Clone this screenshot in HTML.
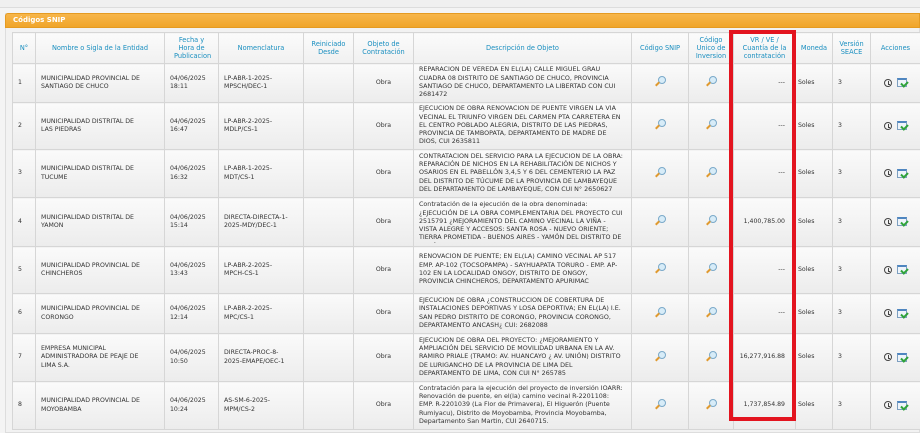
<!DOCTYPE html>
<html><head><meta charset="utf-8"><style>
*{margin:0;padding:0;box-sizing:border-box}
body{width:920px;height:426px;overflow:hidden;background:#f4f4f4;font-family:"DejaVu Sans","Liberation Sans",sans-serif;position:relative}
.top{position:absolute;left:0;top:0;width:920px;height:8px;background:#f0f0f0;border-bottom:1px solid #ddd}
.panel{position:absolute;left:5px;top:13px;width:915px;height:420px;background:#f2f2f2;border:1px solid #ddd}
.bar{position:absolute;left:5px;top:13px;width:915px;height:15px;background:linear-gradient(#f7b64a,#f0a52a);border:1px solid #e59b22;border-radius:3px 0 0 0;color:#fff;font-weight:bold;font-size:7px;line-height:13px;padding-left:7px}
table{position:absolute;left:12px;top:32px;border-collapse:collapse;table-layout:fixed;width:908px;font-size:6.2px;color:#333}
th{color:#1a8fc0;font-weight:normal;font-size:6.6px;background:linear-gradient(#fbfbfb,#f0f0f0);height:31px;border:1px solid #d6d6d6;text-align:center;line-height:8.2px;padding:0 7px}
td{border:1px solid #d6d6d6;background:linear-gradient(#fafafa,#ececec);line-height:8.3px;padding:0 5px;vertical-align:middle}
td div{overflow:hidden}
td.d{font-size:6.35px;padding-right:7px}
td.n{padding-right:22px}td.m{padding-right:14px}
td.c{text-align:center}td.r{text-align:right;padding-right:10px}
.mg{display:inline-block;position:relative;width:10px;height:10px}
.mg:before{content:"";position:absolute;left:3px;top:0;width:6px;height:6px;border-radius:50%;border:1px solid #7aa9c9;background:#d7ecf8}
.mg:after{content:"";position:absolute;left:0;top:7px;width:5px;height:2px;background:#e09a30;transform:rotate(-45deg)}
.ck{display:inline-block;width:8px;height:8px;border:1.3px solid #444;border-radius:50%;position:relative;vertical-align:middle}
.ck:after{content:"";position:absolute;left:2.5px;top:1px;width:1.5px;height:3px;border-left:1px solid #444;border-bottom:1px solid #444}
.cal{display:inline-block;width:10px;height:9px;border:1px solid #7d9fc0;border-top:2px solid #4f86c0;background:#eef4fa;position:relative;vertical-align:middle;margin-left:5px}
.cal:after{content:"";position:absolute;right:-2px;bottom:0px;width:5px;height:3px;border-left:2px solid #2fa33a;border-bottom:2px solid #2fa33a;transform:rotate(-45deg)}
.red{position:absolute;left:729px;top:30px;width:67px;height:391px;border:4px solid #e3141f}
</style></head><body>
<div class="top"></div>
<div class="panel"></div>
<div class="bar">Códigos SNIP</div>
<table>
<colgroup><col style="width:23px"><col style="width:129px"><col style="width:54px"><col style="width:85px"><col style="width:50px"><col style="width:60px"><col style="width:218px"><col style="width:57px"><col style="width:45px"><col style="width:62px"><col style="width:37px"><col style="width:38px"><col style="width:50px"></colgroup>
<tr><th style="padding:0">N°</th><th>Nombre o Sigla de la Entidad</th><th style="padding:0 9px">Fecha y Hora de Publicacion</th><th>Nomenclatura</th><th>Reiniciado Desde</th><th style="padding:0 4px">Objeto de Contratación</th><th>Descripción de Objeto</th><th style="padding:0">Código SNIP</th><th style="padding:0 3px">Código Unico de Inversion</th><th style="padding:0 5px">VR / VE / Cuantía de la contratación</th><th style="padding:0">Moneda</th><th style="padding:0 3px">Versión SEACE</th><th style="padding:0">Acciones</th></tr>
<tr style="height:39px"><td>1</td><td class="n">MUNICIPALIDAD PROVINCIAL DE SANTIAGO DE CHUCO</td><td>04/06/2025 18:11</td><td class="m">LP-ABR-1-2025-MPSCH/DEC-1</td><td></td><td class="c">Obra</td><td class="d"><div style="max-height:33.2px">REPARACIÓN DE VEREDA EN EL(LA) CALLE MIGUEL GRAU CUADRA 08 DISTRITO DE SANTIAGO DE CHUCO, PROVINCIA SANTIAGO DE CHUCO, DEPARTAMENTO LA LIBERTAD CON CUI 2681472</div></td><td class="c"><span class="mg"></span></td><td class="c"><span class="mg"></span></td><td class="r">---</td><td style="padding:0 2px">Soles</td><td>3</td><td class="c"><span class="ck"></span><span class="cal"></span></td></tr>
<tr style="height:47px"><td>2</td><td class="n">MUNICIPALIDAD DISTRITAL DE LAS PIEDRAS</td><td>04/06/2025 16:47</td><td class="m">LP-ABR-2-2025-MDLP/CS-1</td><td></td><td class="c">Obra</td><td class="d"><div style="max-height:41.5px">EJECUCION DE OBRA RENOVACION DE PUENTE VIRGEN LA VIA VECINAL EL TRIUNFO VIRGEN DEL CARMEN PTA CARRETERA EN EL CENTRO POBLADO ALEGRIA, DISTRITO DE LAS PIEDRAS, PROVINCIA DE TAMBOPATA, DEPARTAMENTO DE MADRE DE DIOS, CUI 2635811</div></td><td class="c"><span class="mg"></span></td><td class="c"><span class="mg"></span></td><td class="r">---</td><td style="padding:0 2px">Soles</td><td>3</td><td class="c"><span class="ck"></span><span class="cal"></span></td></tr>
<tr style="height:48px"><td>3</td><td class="n">MUNICIPALIDAD DISTRITAL DE TUCUME</td><td>04/06/2025 16:32</td><td class="m">LP-ABR-1-2025-MDT/CS-1</td><td></td><td class="c">Obra</td><td class="d"><div style="max-height:41.5px">CONTRATACIÓN DEL SERVICIO PARA LA EJECUCIÓN DE LA OBRA: REPARACIÓN DE NICHOS EN LA REHABILITACIÓN DE NICHOS Y OSARIOS EN EL PABELLÓN 3,4,5 Y 6 DEL CEMENTERIO LA PAZ DEL DISTRITO DE TÚCUME DE LA PROVINCIA DE LAMBAYEQUE DEL DEPARTAMENTO DE LAMBAYEQUE, CON CUI N° 2650627</div></td><td class="c"><span class="mg"></span></td><td class="c"><span class="mg"></span></td><td class="r">---</td><td style="padding:0 2px">Soles</td><td>3</td><td class="c"><span class="ck"></span><span class="cal"></span></td></tr>
<tr style="height:49px"><td>4</td><td class="n">MUNICIPALIDAD DISTRITAL DE YAMON</td><td>04/06/2025 15:14</td><td class="m">DIRECTA-DIRECTA-1-2025-MDY/DEC-1</td><td></td><td class="c">Obra</td><td class="d"><div style="max-height:41.5px">Contratación de la ejecución de la obra denominada: ¿EJECUCIÓN DE LA OBRA COMPLEMENTARIA DEL PROYECTO CUI 2515791 ¿MEJORAMIENTO DEL CAMINO VECINAL LA VIÑA - VISTA ALEGRE Y ACCESOS: SANTA ROSA - NUEVO ORIENTE; TIERRA PROMETIDA - BUENOS AIRES - YAMÓN DEL DISTRITO DE YAMÓN - PROVINCIA DE UTCUBAMBA ¿ DE</div></td><td class="c"><span class="mg"></span></td><td class="c"><span class="mg"></span></td><td class="r">1,400,785.00</td><td style="padding:0 2px">Soles</td><td>3</td><td class="c"><span class="ck"></span><span class="cal"></span></td></tr>
<tr style="height:47px"><td>5</td><td class="n">MUNICIPALIDAD PROVINCIAL DE CHINCHEROS</td><td>04/06/2025 13:43</td><td class="m">LP-ABR-2-2025-MPCH-CS-1</td><td></td><td class="c">Obra</td><td class="d"><div style="max-height:33.2px">RENOVACION DE PUENTE; EN EL(LA) CAMINO VECINAL AP 517 EMP. AP-102 (TOCSOPAMPA) - SAYHUAPATA TORURO - EMP. AP-102 EN LA LOCALIDAD ONGOY, DISTRITO DE ONGOY, PROVINCIA CHINCHEROS, DEPARTAMENTO APURIMAC CUI:2533358</div></td><td class="c"><span class="mg"></span></td><td class="c"><span class="mg"></span></td><td class="r">---</td><td style="padding:0 2px">Soles</td><td>3</td><td class="c"><span class="ck"></span><span class="cal"></span></td></tr>
<tr style="height:40px"><td>6</td><td class="n">MUNICIPALIDAD PROVINCIAL DE CORONGO</td><td>04/06/2025 12:14</td><td class="m">LP-ABR-2-2025-MPC/CS-1</td><td></td><td class="c">Obra</td><td class="d"><div style="max-height:33.2px">EJECUCION DE OBRA ¿CONSTRUCCION DE COBERTURA DE INSTALACIONES DEPORTIVAS Y LOSA DEPORTIVA; EN EL(LA) I.E. SAN PEDRO DISTRITO DE CORONGO, PROVINCIA CORONGO, DEPARTAMENTO ANCASH¿ CUI: 2682088</div></td><td class="c"><span class="mg"></span></td><td class="c"><span class="mg"></span></td><td class="r">---</td><td style="padding:0 2px">Soles</td><td>3</td><td class="c"><span class="ck"></span><span class="cal"></span></td></tr>
<tr style="height:48px"><td>7</td><td class="n">EMPRESA MUNICIPAL ADMINISTRADORA DE PEAJE DE LIMA S.A.</td><td>04/06/2025 10:50</td><td class="m">DIRECTA-PROC-8-2025-EMAPE/OEC-1</td><td></td><td class="c">Obra</td><td class="d"><div style="max-height:41.5px">EJECUCIÓN DE OBRA DEL PROYECTO: ¿MEJORAMIENTO Y AMPLIACIÓN DEL SERVICIO DE MOVILIDAD URBANA EN LA AV. RAMIRO PRIALE (TRAMO: AV. HUANCAYO ¿ AV. UNIÓN) DISTRITO DE LURIGANCHO DE LA PROVINCIA DE LIMA DEL DEPARTAMENTO DE LIMA, CON CUI N° 265785</div></td><td class="c"><span class="mg"></span></td><td class="c"><span class="mg"></span></td><td class="r">16,277,916.88</td><td style="padding:0 2px">Soles</td><td>3</td><td class="c"><span class="ck"></span><span class="cal"></span></td></tr>
<tr style="height:48px"><td>8</td><td class="n">MUNICIPALIDAD PROVINCIAL DE MOYOBAMBA</td><td>04/06/2025 10:24</td><td class="m">AS-SM-6-2025-MPM/CS-2</td><td></td><td class="c">Obra</td><td class="d"><div style="max-height:41.5px">Contratación para la ejecución del proyecto de inversión IOARR: Renovación de puente, en el(la) camino vecinal R-2201108: EMP. R-2201039 (La Flor de Primavera), El Higuerón (Puente Rumiyacu), Distrito de Moyobamba, Provincia Moyobamba, Departamento San Martin, CUI 2640715.</div></td><td class="c"><span class="mg"></span></td><td class="c"><span class="mg"></span></td><td class="r">1,737,854.89</td><td style="padding:0 2px">Soles</td><td>3</td><td class="c"><span class="ck"></span><span class="cal"></span></td></tr>
</table>
<div class="red"></div>
</body></html>
